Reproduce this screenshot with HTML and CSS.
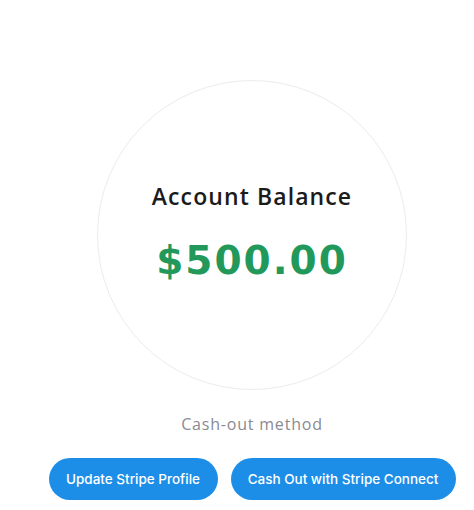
FILE: index.html
```html
<!DOCTYPE html>
<html>
<head>
<meta charset="utf-8">
<link rel="stylesheet" href="styles.css">
</head>
<body>
<main class="page">
  <section class="balance-circle">
    <h2 class="balance-title">Account Balance</h2>
    <div class="balance-amount">$500.00</div>
  </section>
  <p class="method-label">Cash-out method</p>
  <div class="actions">
    <button class="btn btn-profile">Update Stripe Profile</button>
    <button class="btn btn-cashout">Cash Out with Stripe Connect</button>
  </div>
</main>
</body>
</html>
```

FILE: styles.css
```css
html, body {
  margin: 0;
  padding: 0;
  background: #ffffff;
}
.page {
  box-sizing: border-box;
  width: 474px;
  padding: 80px 0 0 30px;
  display: flex;
  flex-direction: column;
  align-items: center;
  font-family: "Open Sans", "Liberation Sans", sans-serif;
}
.balance-circle {
  box-sizing: border-box;
  width: 310px;
  height: 310px;
  border: 1px solid #ececec;
  border-radius: 50%;
  display: flex;
  flex-direction: column;
  align-items: center;
  justify-content: center;
  padding-bottom: 5px;
}
.balance-title {
  margin: 0;
  font-size: 23px;
  font-weight: 600;
  line-height: 30px;
  letter-spacing: 1.1px;
  color: #1b1b1b;
}
.balance-amount {
  margin-top: 27px;
  font-family: "DejaVu Sans", "Open Sans", sans-serif;
  font-size: 39px;
  font-weight: 700;
  line-height: 46px;
  letter-spacing: 2px;
  color: #22995a;
}
.method-label {
  margin: 22px 0 0;
  font-size: 16px;
  line-height: 24px;
  letter-spacing: 0.8px;
  color: #8a8a92;
}
.actions {
  display: flex;
  gap: 13px;
  margin-top: 22px;
}
.btn {
  height: 42px;
  border: none;
  border-radius: 21px;
  background: #1c8ee8;
  color: #ffffff;
  font-family: Inter, "Liberation Sans", sans-serif;
  font-size: 13.5px;
  font-weight: 500;
  padding: 0;
  white-space: nowrap;
  cursor: pointer;
}
.btn-profile { width: 169px; }
.btn-cashout { width: 225px; }
```
